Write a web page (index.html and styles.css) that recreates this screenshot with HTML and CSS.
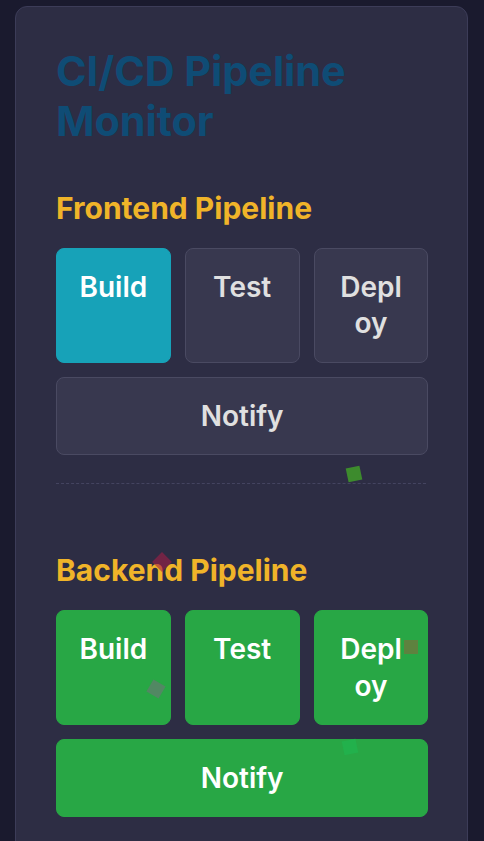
FILE: index.html
```html
<!DOCTYPE html>
<html lang="en">
<head>
<meta charset="utf-8">
<title>CI/CD Pipeline Monitor</title>
<link rel="stylesheet" href="styles.css">
</head>
<body>
<div class="card">
  <h1 class="title">CI/CD Pipeline Monitor</h1>
  <section class="pipeline divided">
    <h2 class="pipe-name">Frontend Pipeline</h2>
    <div class="stages">
      <div class="stage active">Build</div>
      <div class="stage">Test</div>
      <div class="stage">Deploy</div>
      <div class="stage wide">Notify</div>
    </div>
  </section>
  <section class="pipeline">
    <h2 class="pipe-name">Backend Pipeline</h2>
    <div class="stages">
      <div class="stage done">Build</div>
      <div class="stage done">Test</div>
      <div class="stage done">Deploy</div>
      <div class="stage done wide">Notify</div>
    </div>
  </section>
  <span class="confetti c1"></span>
  <span class="confetti c2"></span>
  <span class="confetti c3"></span>
  <span class="confetti c4"></span>
  <span class="confetti c5"></span>
</div>
</body>
</html>
```
FILE: styles.css
```css
html, body {
  margin: 0;
  padding: 0;
  background: #1a1a2e;
  font-family: Inter, "Noto Sans", sans-serif;
}
body {
  padding: 6px 16px 0 15px;
  height: 841px;
  box-sizing: border-box;
  overflow: hidden;
}
.card {
  position: relative;
  background: #2d2d44;
  border: 1px solid #3c3c58;
  border-radius: 12px;
  padding: 40px 41px 40px 40px;
  min-height: 900px;
}
.title {
  margin: 0 0 43px 0;
  color: #0f4c75;
  font-size: 41.3px;
  line-height: 1.21;
  font-weight: 700;
}
.pipeline {
  margin-bottom: 40px;
}
.divided {
  padding-bottom: 28px;
  border-bottom: 1px dashed #444460;
  margin-bottom: 68px;
}
.pipe-name {
  margin: 0 0 22px 0;
  color: #f0b429;
  font-size: 30px;
  line-height: 1.2;
  font-weight: 700;
}
.stages {
  display: grid;
  grid-template-columns: repeat(3, 1fr);
  gap: 14px;
}
.stage {
  aspect-ratio: 1 / 1;
  box-sizing: border-box;
  padding: 20px;
  border-radius: 8px;
  background: #38384f;
  border: 1px solid #4a4a62;
  color: #e0e0e0;
  font-size: 28px;
  line-height: 1.3;
  font-weight: 600;
  text-align: center;
  word-break: break-all;
}
.stage.wide {
  grid-column: 1 / -1;
  aspect-ratio: auto;
}
.stage.active {
  background: #17a2b8;
  border-color: #17a2b8;
  color: #ffffff;
}
.stage.done {
  background: #28a745;
  border-color: #28a745;
  color: #ffffff;
}
.confetti {
  position: absolute;
  width: 14px;
  height: 14px;
}
.c1 { left: 331px; top: 460px; background: #3d8b2d; transform: rotate(-12deg); }
.c2 { left: 139px; top: 548px; background: rgba(160, 30, 70, 0.6); transform: rotate(45deg); }
.c3 { left: 133px; top: 675px; background: rgba(110, 115, 120, 0.6); transform: rotate(30deg); }
.c4 { left: 388px; top: 633px; background: rgba(130, 105, 60, 0.6); }
.c5 { left: 327px; top: 733px; background: #22b14c; transform: rotate(-12deg); }
```
